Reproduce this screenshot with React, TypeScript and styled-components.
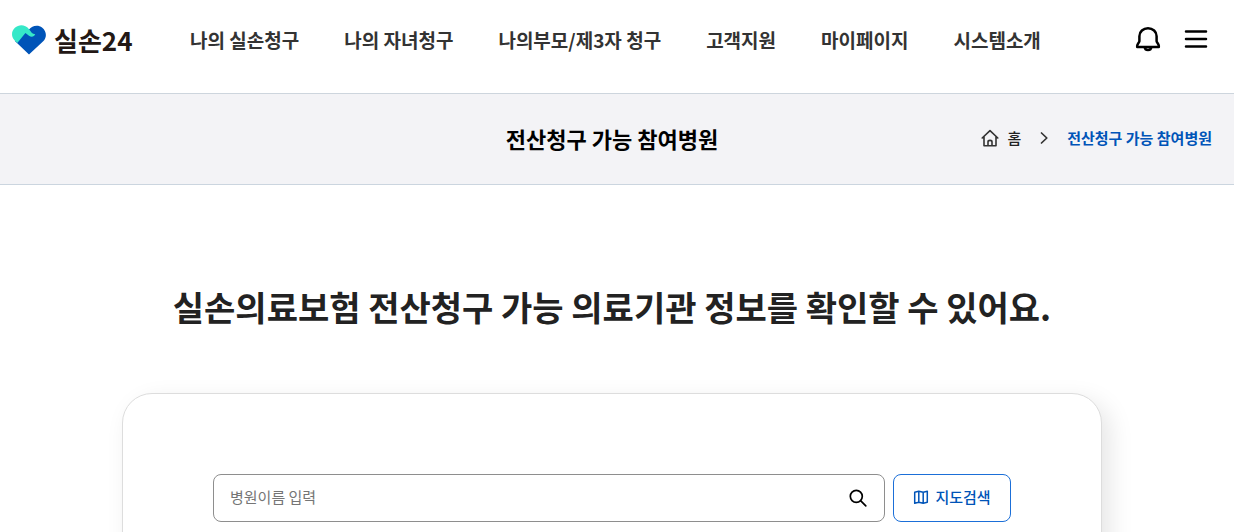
import React from 'react';
import styled, { createGlobalStyle } from 'styled-components';

const GlobalStyle = createGlobalStyle`
  *, *::before, *::after { box-sizing: border-box; }
  body {
    margin: 0;
    background: #fff;
    color: #222;
    font-family: 'Noto Sans CJK KR', 'Noto Sans', sans-serif;
  }
  h1, h2, ul, ol { margin: 0; padding: 0; }
  ul, ol { list-style: none; }
  a { color: inherit; text-decoration: none; }
  button, input { font: inherit; }
  svg { display: block; flex: none; }
`;

const Page = styled.div`
  height: 100vh;
  overflow: hidden;
`;

const Header = styled.header`
  display: flex;
  align-items: flex-start;
  height: 94px;
  padding: 20px 24px 0 12px;
  border-bottom: 1px solid #cdd5dd;
`;

const Logo = styled.a`
  display: flex;
  align-items: center;
  gap: 8px;
  width: 178px;
  height: 40px;
  color: #231815;
  font-size: 26px;
  font-weight: 700;
  line-height: 38px;
`;

const Nav = styled.nav`
  flex: 1;
`;

const Menu = styled.ul`
  display: flex;
  gap: 45px;
  font-size: 19px;
  font-weight: 700;
  line-height: 40px;
  color: #333;
  white-space: nowrap;
`;

const Tools = styled.div`
  display: flex;
  gap: 20px;
  padding-top: 5px;
`;

const IconButton = styled.button`
  display: flex;
  padding: 0;
  border: 0;
  background: none;
  color: #000;
  cursor: pointer;
`;

const TitleBar = styled.div`
  display: grid;
  grid-template-columns: 1fr auto 1fr;
  align-items: center;
  height: 91px;
  padding: 0 22px 3px 12px;
  background: #f3f3f6;
  border-bottom: 1px solid #cbd5df;
`;

const PageTitle = styled.h1`
  grid-column: 2;
  font-size: 22px;
  line-height: 32px;
  color: #000;
`;

const Breadcrumb = styled.ol`
  display: flex;
  align-items: center;
  justify-content: flex-end;
  font-size: 15px;
  line-height: 24px;
  white-space: nowrap;
`;

const Crumb = styled.li<{ $current?: boolean }>`
  display: flex;
  align-items: center;
  gap: 16px;
  padding-left: ${(p) => (p.$current ? '16px' : '0')};
  color: ${(p) => (p.$current ? '#0054b8' : '#222')};
  font-weight: ${(p) => (p.$current ? 700 : 500)};
`;

const HomeLink = styled.a`
  display: flex;
  align-items: center;
  gap: 8px;
`;

const Main = styled.main`
  display: flex;
  flex-direction: column;
  align-items: center;
  padding: 98px 22px 60px 12px;
`;

const Headline = styled.h2`
  font-size: 34px;
  line-height: 48px;
  color: #222;
`;

const Card = styled.section`
  width: 100%;
  max-width: 980px;
  min-height: 300px;
  margin-top: 62px;
  padding: 80px 90px;
  border: 1px solid #ddd;
  border-radius: 30px;
  background: #fff;
  box-shadow: 8px 8px 24px rgba(0, 0, 0, 0.1);
`;

const SearchForm = styled.form`
  display: flex;
  gap: 8px;
`;

const SearchField = styled.div`
  display: flex;
  flex: 1;
  align-items: center;
  height: 48px;
  padding: 0 16px;
  border: 1px solid #8e8e8e;
  border-radius: 8px;
`;

const SearchInput = styled.input`
  flex: 1;
  min-width: 0;
  padding: 0 0 2px;
  border: 0;
  outline: 0;
  background: none;
  font-size: 15px;
  line-height: 24px;
  color: #222;

  &::placeholder { color: #757575; opacity: 1; }
`;

const MapButton = styled.button`
  display: flex;
  align-items: center;
  justify-content: center;
  gap: 6px;
  width: 118px;
  height: 48px;
  padding: 0 0 2px;
  border: 1px solid #1b6fd8;
  border-radius: 8px;
  background: #fff;
  color: #0054b8;
  font-size: 15px;
  font-weight: 500;
  line-height: 24px;
  cursor: pointer;
`;

const LogoMark = () => (
  <svg width="34" height="30" viewBox="0 0 34 30" aria-hidden="true">
    <path d="M17 4.400C20 .600 26-.800 30.300 2.700C34.800 6.400 35 12.500 31.200 16.300L17 29.500L2.900 15.900L12 7Z" fill="#0054b8" />
    <path d="M5.300 17.900L2.700 15.400C-1 11.700-.800 6.100 2.900 2.800C7-.900 13.200-.500 16.900 3.900L19.500 7.400C20.600 8.700 22 8.900 23.200 9.300C22.300 11.700 19.400 12.500 17 10.700L13.400 7.900Z" fill="#36e8c8" />
  </svg>
);

const BellIcon = () => (
  <svg width="28" height="28" viewBox="0 0 28 28" fill="none" stroke="currentColor" strokeWidth="2.500" strokeLinejoin="round" aria-hidden="true">
    <path d="M14 3.200C9.200 3.200 5.400 6.700 5.400 11.200V16.200C5.400 17.400 3.200 19 3.200 20.800V21.900H24.800V20.800C24.800 19 22.600 17.400 22.600 16.200V11.200C22.600 6.700 18.800 3.200 14 3.200Z" />
    <path d="M10.800 22C10.800 23.900 12.200 25 14 25S17.200 23.900 17.200 22" />
  </svg>
);

const MenuIcon = () => (
  <svg width="28" height="28" viewBox="0 0 28 28" stroke="currentColor" strokeWidth="2.500" strokeLinecap="round" aria-hidden="true">
    <path d="M4 6.500H24M4 14H24M4 21.500H24" />
  </svg>
);

const HomeIcon = () => (
  <svg width="18" height="18" viewBox="0 0 18 18" fill="none" stroke="#333" strokeWidth="1.600" strokeLinecap="round" strokeLinejoin="round" aria-hidden="true">
    <path d="M1.200 9L9 1.600L16.800 9M3 7.500V16.700H15V7.500M7 16.700V13C7 11.900 7.800 11.400 9 11.400S11 11.900 11 13V16.700" />
  </svg>
);

const ChevronIcon = () => (
  <svg width="14" height="14" viewBox="0 0 14 14" fill="none" stroke="#333" strokeWidth="1.700" strokeLinecap="round" strokeLinejoin="round" aria-hidden="true">
    <path d="M4.500 2L9.800 7L4.500 12" />
  </svg>
);

const SearchIcon = () => (
  <svg width="20" height="20" viewBox="0 0 20 20" fill="none" stroke="currentColor" strokeWidth="1.700" strokeLinecap="round" aria-hidden="true">
    <circle cx="8.300" cy="8.300" r="6" />
    <path d="M12.800 12.800L17.800 17.800" />
  </svg>
);

const MapIcon = () => (
  <svg width="16" height="16" viewBox="0 0 16 16" fill="none" stroke="currentColor" strokeWidth="1.500" strokeLinejoin="round" aria-hidden="true">
    <path d="M1.700 3.200L5.800 2.200L10.200 3.200L14.300 2.200V13.200L10.200 14.200L5.800 13.200L1.700 14.200ZM5.800 2.200V13.200M10.200 3.200V14.200" />
  </svg>
);

const menuItems = ['나의 실손청구', '나의 자녀청구', '나의부모/제3자 청구', '고객지원', '마이페이지', '시스템소개'];

export default function App() {
  return (
    <Page>
      <GlobalStyle />
      <Header>
        <Logo href="#">
          <LogoMark />
          <span>실손24</span>
        </Logo>
        <Nav aria-label="주 메뉴">
          <Menu>
            {menuItems.map((item) => (
              <li key={item}><a href="#">{item}</a></li>
            ))}
          </Menu>
        </Nav>
        <Tools>
          <IconButton type="button" aria-label="알림"><BellIcon /></IconButton>
          <IconButton type="button" aria-label="전체 메뉴"><MenuIcon /></IconButton>
        </Tools>
      </Header>
      <TitleBar>
        <PageTitle>전산청구 가능 참여병원</PageTitle>
        <Breadcrumb>
          <Crumb>
            <HomeLink href="#"><HomeIcon />홈</HomeLink>
            <ChevronIcon />
          </Crumb>
          <Crumb $current aria-current="page">전산청구 가능 참여병원</Crumb>
        </Breadcrumb>
      </TitleBar>
      <Main>
        <Headline>실손의료보험 전산청구 가능 의료기관 정보를 확인할 수 있어요.</Headline>
        <Card>
          <SearchForm onSubmit={(e) => e.preventDefault()}>
            <SearchField>
              <SearchInput type="text" aria-label="병원이름" placeholder="병원이름 입력" />
              <IconButton type="submit" aria-label="검색"><SearchIcon /></IconButton>
            </SearchField>
            <MapButton type="button"><MapIcon />지도검색</MapButton>
          </SearchForm>
        </Card>
      </Main>
    </Page>
  );
}
